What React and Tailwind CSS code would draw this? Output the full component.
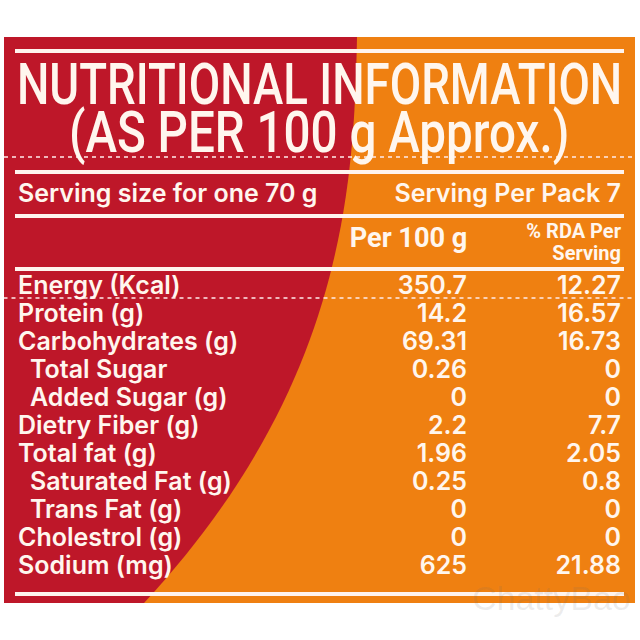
const rows = [
  ["Energy (Kcal)", "350.7", "12.27", false, true],
  ["Protein (g)", "14.2", "16.57", false, false],
  ["Carbohydrates (g)", "69.31", "16.73", false, false],
  ["Total Sugar", "0.26", "0", true, false],
  ["Added Sugar (g)", "0", "0", true, false],
  ["Dietry Fiber (g)", "2.2", "7.7", false, false],
  ["Total fat (g)", "1.96", "2.05", false, false],
  ["Saturated Fat (g)", "0.25", "0.8", true, false],
  ["Trans Fat (g)", "0", "0", true, false],
  ["Cholestrol (g)", "0", "0", false, false],
  ["Sodium (mg)", "625", "21.88", false, false],
];

function Line() {
  return <div className="h-[4px] bg-[#fff4ee]" />;
}

function Dotted() {
  return (
    <div className="-mx-[11px] h-[2px] bg-[linear-gradient(90deg,rgba(255,235,235,0.75)_50%,transparent_50%)] bg-[length:8px_2px] bg-repeat-x" />
  );
}

export default function App() {
  return (
    <div className="relative w-[640px] h-[640px] bg-white overflow-hidden">
      <div className="relative ml-[4px] mt-[37px] w-[631px] h-[566px] bg-[#ef8011] text-[#fff6ee] overflow-hidden">
        <svg
          className="absolute inset-0 w-full h-full"
          viewBox="0 0 631 566"
          preserveAspectRatio="none"
        >
          <path d="M0 0H353C350 150 340 350 140 566H0Z" fill="#be1729" />
        </svg>
        <div className="relative flex flex-col px-[11px] pt-[12px]">
          <Line />
          <div className="mt-[7px] flex flex-col font-['Roboto',sans-serif] font-medium text-[58px] leading-[48px]">
            <div className="flex justify-center w-full whitespace-nowrap">
              <span className="inline-block scale-x-[0.787]">NUTRITIONAL INFORMATION</span>
            </div>
            <div className="flex justify-center w-full whitespace-nowrap">
              <span className="inline-block scale-x-[0.82]">(AS PER 100 g Approx.)</span>
            </div>
          </div>
          <Dotted />
          <div className="mt-[12px]">
            <Line />
          </div>
          <div className="h-[40px] flex items-center justify-between px-[3px] font-['Inter',sans-serif] font-semibold text-[25px]">
            <span>Serving size for one 70 g</span>
            <span>Serving Per Pack 7</span>
          </div>
          <Line />
          <div className="h-[49px] grid grid-cols-[1fr_120px_157px] font-['Roboto',sans-serif] font-bold">
            <div />
            <div className="flex justify-end pt-[4px] text-[28px] leading-[32px] whitespace-nowrap">
              <span className="inline-block origin-right scale-x-[0.97]">Per 100 g</span>
            </div>
            <div className="flex flex-col items-end pr-[3px] pt-[2px] text-[20px] leading-[22px] whitespace-nowrap">
              <span>% RDA Per</span>
              <span>Serving</span>
            </div>
          </div>
          <Line />
          <div className="flex flex-col font-['Inter',sans-serif] font-semibold text-[25px]">
            {rows.map(([label, a, b, indent, dotted]) => (
              <div
                key={label}
                className={
                  dotted
                    ? "-mx-[11px] px-[11px] h-[28px] grid grid-cols-[1fr_120px_157px] items-center bg-[linear-gradient(90deg,rgba(255,235,235,0.75)_50%,transparent_50%)] bg-[length:8px_2px] bg-bottom bg-repeat-x"
                    : "h-[28px] grid grid-cols-[1fr_120px_157px] items-center"
                }
              >
                <span className={indent ? "pl-[15px] leading-[28px]" : "pl-[3px] leading-[28px]"}>{label}</span>
                <span className="text-right leading-[28px]">{a}</span>
                <span className="text-right pr-[3px] leading-[28px]">{b}</span>
              </div>
            ))}
          </div>
          <div className="mt-[13px]">
            <Line />
          </div>
        </div>
      </div>
      <div className="absolute left-[472px] top-[578px] font-['Liberation_Sans',sans-serif] text-[34px] leading-[40px] text-[rgba(110,110,110,0.13)]">
        ChattyBao
      </div>
    </div>
  );
}
